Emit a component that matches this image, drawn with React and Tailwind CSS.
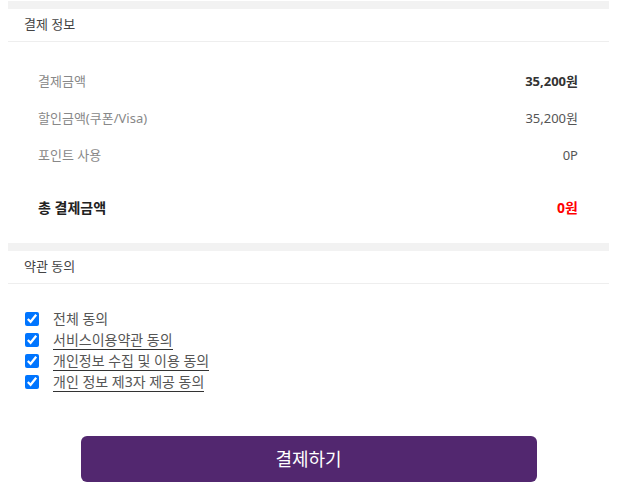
import React from 'react';

const rows = [
  { label: '결제금액', value: '35,200원', strong: true },
  { label: '할인금액(쿠폰/Visa)', value: '35,200원' },
  { label: '포인트 사용', value: '0P' },
];

const terms = [
  { label: '전체 동의', underline: false },
  { label: '서비스이용약관 동의', underline: true },
  { label: '개인정보 수집 및 이용 동의', underline: true },
  { label: '개인 정보 제3자 제공 동의', underline: true },
];

const SectionHeader = ({ title }) => (
  <div>
    <div className="h-2 bg-[#f2f2f2]"></div>
    <div className="h-[33px] flex items-center px-4 border-b border-[#eeeeee] text-[13px] text-[#444]">
      {title}
    </div>
  </div>
);

const App = () => {
  return (
    <div
      className="bg-white min-h-[496px] px-2 pt-px"
      style={{ fontFamily: "'Noto Sans', 'Noto Sans CJK KR', sans-serif" }}
    >
      <div className="w-[601px]">
        <SectionHeader title="결제 정보" />

        <div className="pt-[21px] pb-[17px] pl-[30px] pr-[31px]">
          {rows.map((row) => (
            <div key={row.label} className="h-[37px] flex items-center justify-between text-[13px]">
              <span className="text-[#888]">{row.label}</span>
              <span className={row.strong ? 'font-bold text-[#333]' : 'text-[#555]'}>{row.value}</span>
            </div>
          ))}
          <div className="mt-[15px] h-[37px] flex items-center justify-between text-[14px] font-bold">
            <span className="text-[#222]">총 결제금액</span>
            <span className="text-[#ff0000]">0원</span>
          </div>
        </div>

        <SectionHeader title="약관 동의" />

        <div className="pt-[24px] pl-[17px]">
          {terms.map((term) => (
            <label key={term.label} className="h-[21px] flex items-center">
              <input
                type="checkbox"
                checked
                readOnly
                className="w-[14px] h-[14px] m-0 accent-[#0075ff]"
              />
              <span
                className={`ml-[14px] text-[14px] leading-[19px] text-[#555] ${
                  term.underline ? 'border-b border-[#333]' : ''
                }`}
              >
                {term.label}
              </span>
            </label>
          ))}
        </div>

        <div className="flex justify-center mt-[44px]">
          <button className="w-[456px] h-[46px] rounded-md bg-[#52276f] text-white text-[18px]">
            결제하기
          </button>
        </div>
      </div>
    </div>
  );
};

export default App;
